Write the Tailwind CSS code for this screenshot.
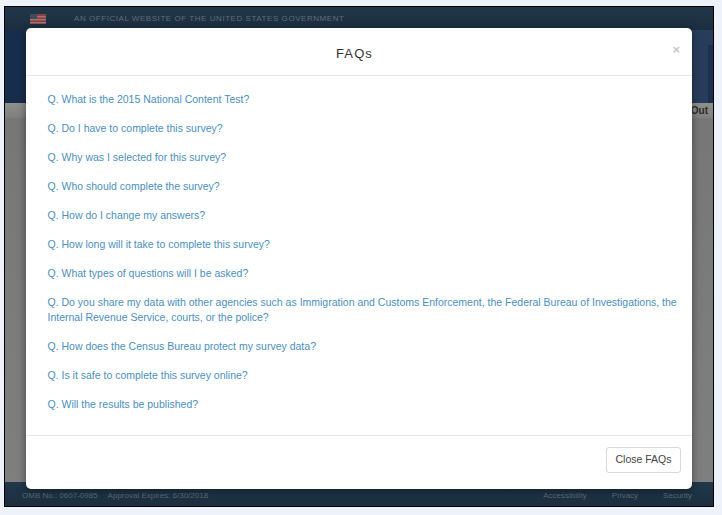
<!DOCTYPE html>
<html lang="en">
<head>
    <meta charset="UTF-8">
    <title>FAQs</title>
    <script src="https://cdn.jsdelivr.net/npm/@tailwindcss/browser@4"></script>
</head>
<body class="w-[722px] h-[515px] overflow-hidden bg-[#eef2fb] pt-[6px] pl-[4px] font-['Liberation_Sans',Arial,sans-serif]">
    <!-- page behind the modal, already dimmed -->
    <div class="relative w-[710px] h-[501px] border border-black flex flex-col bg-[#7d7d7d]">
        <div class="h-[23px] shrink-0 flex items-center bg-gradient-to-b from-[#20364a] to-[#1b2e3f] pl-[25px]">
            <svg width="16" height="10" viewBox="0 0 16 10" class="block">
                <rect width="16" height="10" fill="#86423f"/>
                <rect y="2" width="16" height="1.4" fill="#a4736f"/>
                <rect y="5" width="16" height="1.4" fill="#a4736f"/>
                <rect y="8" width="16" height="1.4" fill="#a4736f"/>
                <rect width="7" height="5" fill="#3f4a5e"/>
            </svg>
            <span class="ml-[28px] text-[8px] tracking-[0.55px] text-[#5d6e7c] leading-none">AN OFFICIAL WEBSITE OF THE UNITED STATES GOVERNMENT</span>
        </div>
        <div class="relative h-[73px] shrink-0 bg-gradient-to-r from-[#172d4c] via-[#1a3050] to-[#283d5b]">
            <!-- faint skyline at the right edge of the banner -->
            <div class="absolute right-0 bottom-0 w-[5px] h-[58px] bg-[#1b2f4e]"></div>
        </div>
        <div class="h-[15px] shrink-0 flex justify-end items-center pr-[5px] bg-gradient-to-b from-[#8f8f8d] to-[#7f7f7d] text-[10px] font-bold text-[#2b2b2b]">Out</div>
        <div class="flex-1 bg-gradient-to-b from-[#777777] to-[#7f7f7f]"></div>
        <div class="h-[24px] shrink-0 flex items-center justify-between bg-gradient-to-b from-[#20384b] to-[#1b2e3f] pl-[17px] pr-[21px] pt-[4px] text-[8px] text-[#5a6a76]">
            <div class="flex gap-[10px]">
                <span>OMB No.: 0607-0985</span>
                <span>Approval Expires: 6/30/2018</span>
            </div>
            <div class="flex gap-[25px]">
                <span>Accessibility</span>
                <span>Privacy</span>
                <span>Security</span>
            </div>
        </div>

        <!-- modal -->
        <div class="absolute left-[21px] top-[21px] w-[666px] h-[461px] bg-white rounded-[5px] shadow-[0_2px_8px_rgba(0,0,0,0.45)] flex flex-col">
            <div class="relative h-[48px] shrink-0 border-b border-[#e8e8e8] flex items-center justify-center">
                <h1 class="text-[13px] tracking-[1.1px] text-[#333333] leading-none mt-[3px] mr-[9px]">FAQs</h1>
                <span class="absolute right-[12px] top-[15px] text-[13px] font-bold leading-none text-[#c8c8c8]">×</span>
            </div>
            <ul class="flex-1 pl-[21.5px] pr-[14px] pt-[16px] text-[10.5px] leading-[15px] text-[#4b8fbf] flex flex-col gap-[14px]">
                <li>Q. What is the 2015 National Content Test?</li>
                <li>Q. Do I have to complete this survey?</li>
                <li>Q. Why was I selected for this survey?</li>
                <li>Q. Who should complete the survey?</li>
                <li>Q. How do I change my answers?</li>
                <li>Q. How long will it take to complete this survey?</li>
                <li>Q. What types of questions will I be asked?</li>
                <li>Q. Do you share my data with other agencies such as Immigration and Customs Enforcement, the Federal Bureau of Investigations, the Internal Revenue Service, courts, or the police?</li>
                <li>Q. How does the Census Bureau protect my survey data?</li>
                <li>Q. Is it safe to complete this survey online?</li>
                <li>Q. Will the results be published?</li>
            </ul>
            <div class="h-[54px] shrink-0 border-t border-[#e8e8e8] flex items-center justify-end pr-[11px]">
                <button class="w-[75px] h-[26px] border border-[#d9d9d9] rounded-[3px] bg-white text-[10.5px] text-[#444444] -mt-[6px]">Close FAQs</button>
            </div>
        </div>
    </div>
</body>
</html>
